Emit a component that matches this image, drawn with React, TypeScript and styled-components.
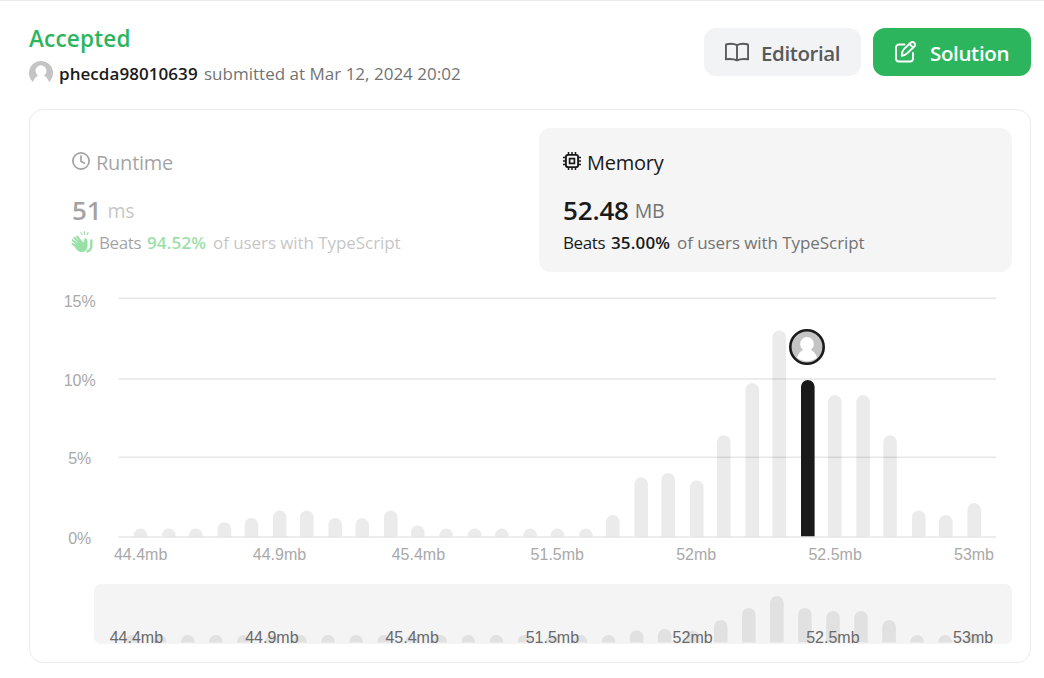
import React from 'react';
import styled, { createGlobalStyle } from 'styled-components';

const GlobalStyle = createGlobalStyle`
  * { box-sizing: border-box; }
  body { margin: 0; background: #fff; font-family: 'Open Sans', 'Noto Sans', sans-serif; color: #1a1a1a; }
`;

const Page = styled.main`
  height: 678px;
  border-top: 1px solid #ebebeb;
  padding: 27px 13px 0 29px;
  overflow: hidden;
`;

const Header = styled.header`
  display: flex;
  justify-content: space-between;
  height: 81px;
`;

const Status = styled.h1`
  margin: 0;
  font-size: 22.5px;
  font-weight: 600;
  line-height: 22px;
  letter-spacing: 0.2px;
  color: #2db55d;
`;

const Submitter = styled.div`
  display: flex;
  align-items: center;
  height: 24px;
  margin-top: 11px;
  font-size: 17px;
  white-space: pre;
`;

const UserName = styled.span`
  margin-left: 6px;
  width: 145px;
  font-weight: 600;
  font-size: 17px;
  letter-spacing: 0.06px;
`;

const SubmittedAt = styled.span`
  color: #737373;
  letter-spacing: 0.01px;
`;

const Actions = styled.div`
  display: flex;
  gap: 12px;
`;

const ActionButton = styled.button<{ $primary?: boolean }>`
  display: flex;
  align-items: center;
  gap: 12px;
  width: ${p => (p.$primary ? 158 : 157)}px;
  height: 48px;
  padding: 2px 0 0 21px;
  border: 0;
  border-radius: 12px;
  font: 600 20.5px/28px 'Open Sans', sans-serif;
  letter-spacing: ${p => (p.$primary ? -0.35 : -0.4)}px;
  color: ${p => (p.$primary ? '#fff' : '#595959')};
  background: ${p => (p.$primary ? '#2db55d' : '#f2f3f5')};
  svg { margin-top: -2px; flex: none; }
`;

const Card = styled.section`
  width: 1002px;
  height: 554px;
  padding: 18px;
  border: 1px solid #ebebeb;
  border-radius: 14px;
`;

const Stats = styled.div`
  display: grid;
  grid-template-columns: 473px 473px;
  gap: 18px;
`;

const Stat = styled.div<{ $active?: boolean }>`
  height: 144px;
  padding: 21px 24px 0;
  border-radius: 12px;
  background: ${p => (p.$active ? '#f5f5f5' : 'transparent')};
  & > * { opacity: ${p => (p.$active ? 1 : 0.4)}; }
`;

const StatTitle = styled.div`
  display: flex;
  align-items: center;
  gap: 6px;
  height: 26px;
  font-size: 20px;
  letter-spacing: -0.25px;
  svg { margin-top: -2px; }
`;

const StatValue = styled.div`
  display: flex;
  align-items: center;
  gap: 7px;
  height: 36px;
  margin-top: 17px;
  font-size: 26px;
  line-height: 36px;
  font-weight: 600;
  letter-spacing: -0.15px;
`;

const Unit = styled.span`
  padding-top: 2px;
  margin-left: -1px;
  font-size: 19.5px;
  font-weight: 400;
  letter-spacing: -0.3px;
  color: #737373;
`;

const Beats = styled.div`
  display: flex;
  align-items: center;
  height: 28px;
  font-size: 17px;
  white-space: pre;
`;

const BeatsLabel = styled.span`
  width: 42px;
  letter-spacing: -0.4px;
`;

const Percent = styled.span<{ $green?: boolean }>`
  width: 59px;
  margin: 0 7px 0 6px;
  font-weight: 600;
  letter-spacing: 0.15px;
  color: ${p => (p.$green ? '#02b128' : '#1a1a1a')};
`;

const Muted = styled.span`
  letter-spacing: -0.07px;
  color: #737373;
`;

const ClapSlot = styled.span`
  display: flex;
  width: 28px;
  margin-left: -1px;
`;

const Chart = styled.svg`
  display: block;
  margin: 12px 0 0 -18px;
  font-family: 'Liberation Sans', Arial, sans-serif;
  font-size: 16px;
`;

const Avatar = ({ size }: { size: number }) => (
  <svg width={size} height={size} viewBox="0 0 24 24">
    <circle cx="12" cy="12" r="12" fill="#c4c4c4" />
    <circle cx="12" cy="9.800" r="5.500" fill="#fff" />
    <path d="M9.500 14h5c2 1.500 4.500 3.500 5.500 6.900L21 24H3L4 20.900C5 17.500 7.500 15.500 9.500 14Z" fill="#fff" />
  </svg>
);

const BookIcon = () => (
  <svg width="24" height="24" viewBox="0 0 24 24" fill="none" stroke="currentColor" strokeWidth="1.900" strokeLinejoin="round">
    <path d="M12 5.100C9 3.500 5 3.500 1.700 4.200Q.9 4.400.9 5.200V19.300C5 18.700 9 18.900 12 20.400C15 18.900 19 18.700 23.100 19.300V5.200Q23.100 4.400 22.300 4.200C19 3.500 15 3.500 12 5.100ZM12 5.100V20.400" />
  </svg>
);

const EditIcon = () => (
  <svg width="24" height="24" viewBox="0 0 24 24" fill="none" stroke="currentColor" strokeWidth="1.900" strokeLinecap="round" strokeLinejoin="round">
    <path d="M10.500 4.500H5a3 3 0 0 0-3 3v11a3 3 0 0 0 3 3h11a3 3 0 0 0 3-3v-5.500" />
    <path d="M7.800 15.700c0-3 .6-5 2.200-6.600l6.600-6.300a2.550 2.550 0 0 1 3.700 0 2.550 2.550 0 0 1 0 3.700l-6.600 6.300c-1.600 1.600-3.200 2.600-5.900 2.900ZM15.400 3.900l3.600 3.600" />
  </svg>
);

const ClockIcon = () => (
  <svg width="18" height="18" viewBox="0 0 18 18" fill="none" stroke="currentColor" strokeWidth="1.700">
    <circle cx="9" cy="9" r="8.100" />
    <path d="M9 4v5.200l3.500 2" strokeLinecap="round" />
  </svg>
);

const ChipIcon = () => (
  <svg width="18" height="18" viewBox="0 0 18 18" fill="none" stroke="currentColor" strokeWidth="1.900">
    <rect x="2.900" y="2.900" width="12.200" height="12.200" rx="2.200" />
    <rect x="6.600" y="6.600" width="4.800" height="4.800" strokeWidth="1.700" />
    <path d="M5.500 0v3M9 0v3M12.500 0v3M5.500 15v3M9 15v3M12.500 15v3M0 5.500h3M0 9h3M0 12.500h3M15 5.500h3M15 9h3M15 12.500h3" strokeWidth="1.500" />
  </svg>
);

const ClapIcon = () => (
  <svg width="22" height="22" viewBox="0 0 22 22" fill="none" stroke="#02b128" strokeLinecap="round">
    <path d="M11.500 12.500 6.200 5.700M9.500 13 3.400 6.800M8 14.500 1.700 9.200M7.500 16.500 1.500 12.800" strokeWidth="2.100" />
    <path d="M14.600 13.500V8.500" strokeWidth="2.700" />
    <path d="M4 14.700 9.500 10 13.500 12V9l2.600 1V15.500C16 21.500 9 22 5.800 18.500Z" fill="#02b128" strokeWidth=".8" strokeLinejoin="round" />
    <path d="M20.300 9.500v5c0 3.300-1.700 5.300-3.800 5.900" strokeWidth="2.400" />
    <path d="M9.900 1.500l1 2M13.500.6v2.800M17.100 1.500l-1 2" strokeWidth="1.100" />
  </svg>
);

const TOPS = [528.5, 528.5, 528.5, 522.3, 518, 510.5, 510.5, 518, 518, 510.5, 525.5, 528.5, 528.5, 528.5, 528.5, 528.5, 528.5,
  515, 477.3, 473, 480.5, 435.3, 383, 330.5, 380, 395, 395, 435.3, 510.5, 515, 503];
const LEFTS = [133.7, 162, 189, 217.6, 244.6, 273, 300, 328.4, 355.4, 384, 411, 439.4, 468, 495, 523.4, 550.6, 579,
  606, 634.4, 661.4, 690, 717, 745.4, 772.4, 801, 828, 856.3, 883.3, 912, 939, 967.4];
const MINI_TOPS = [...Array(18).fill(635), 630.3, 629, 630.5, 620, 608, 596, 608, 611, 611, 620, 635, 635, 634.5];
const LABELS = ['44.4mb', '44.9mb', '45.4mb', '51.5mb', '52mb', '52.5mb', '53mb'];
const GRID: [string, number, number][] = [['15%', 298.3, 307], ['10%', 379, 386], ['5%', 457.3, 464], ['0%', 537, 543.5]];
const SELECTED = 24;

const bar = (x: number, top: number, base: number) => {
  const r = 6.8;
  const h = Math.min(r, base - top);
  return `M${x} ${base}V${top + h}a${r} ${h} 0 0 1 ${2 * r} 0V${base}Z`;
};

const Distribution = () => (
  <Chart width="1000" height="370" viewBox="30 284 1000 370">
    {GRID.map(([label, y, baseline]) => (
      <g key={label}>
        <rect x="118.300" y={y - 0.8} width="877.700" height="1.600" fill="#e8e8e8" />
        <text x="79.700" y={baseline} textAnchor="middle" fill="#a9a9a9">{label}</text>
      </g>
    ))}
    {TOPS.map((top, i) => (
      <path key={i} d={bar(LEFTS[i], top, 536.3)} fill={i === SELECTED ? '#1a1a1a' : '#000'} fillOpacity={i === SELECTED ? 1 : 0.08} />
    ))}
    {LABELS.map((label, i) => (
      <text key={label} x={140.6 + i * 138.9} y="560" textAnchor="middle" fill="#a9a9a9">{label}</text>
    ))}
    <circle cx="807" cy="347" r="16.700" fill="#c4c4c4" />
    <circle cx="807" cy="344" r="6.900" fill="#fff" />
    <path d="M803.500 349.500h7c3 1.500 5.500 4.500 6.500 8a15 15 0 0 1-20 0c1-3.500 3.500-6.500 6.500-8Z" fill="#fff" />
    <circle cx="807" cy="347" r="16.700" fill="none" stroke="#1a1a1a" strokeWidth="2.600" />
    <rect x="94" y="584" width="918" height="60" rx="7" fill="#f4f4f4" />
    {MINI_TOPS.map((top, i) => (
      <path key={i} d={bar(124.9 + i * 28.05, top, 642.6)} fill="#e1e1e1" />
    ))}
    {LABELS.map((label, i) => (
      <text key={label} x={i === 0 ? 136.4 : 131.6 + i * 140.25} y="643" textAnchor="middle" fill="#696969">{label}</text>
    ))}
  </Chart>
);

export default function App() {
  return (
    <Page>
      <GlobalStyle />
      <Header>
        <div>
          <Status>Accepted</Status>
          <Submitter>
            <Avatar size={24} />
            <UserName>phecda98010639</UserName>
            <SubmittedAt>submitted at Mar 12, 2024 20:02</SubmittedAt>
          </Submitter>
        </div>
        <Actions>
          <ActionButton><BookIcon />Editorial</ActionButton>
          <ActionButton $primary><EditIcon />Solution</ActionButton>
        </Actions>
      </Header>
      <Card>
        <Stats>
          <Stat>
            <StatTitle><ClockIcon />Runtime</StatTitle>
            <StatValue>51<Unit>ms</Unit></StatValue>
            <Beats>
              <ClapSlot><ClapIcon /></ClapSlot>
              <BeatsLabel>Beats</BeatsLabel><Percent $green>94.52%</Percent><Muted>of users with TypeScript</Muted>
            </Beats>
          </Stat>
          <Stat $active>
            <StatTitle><ChipIcon />Memory</StatTitle>
            <StatValue>52.48<Unit>MB</Unit></StatValue>
            <Beats>
              <BeatsLabel>Beats</BeatsLabel><Percent>35.00%</Percent><Muted>of users with TypeScript</Muted>
            </Beats>
          </Stat>
        </Stats>
        <Distribution />
      </Card>
    </Page>
  );
}
